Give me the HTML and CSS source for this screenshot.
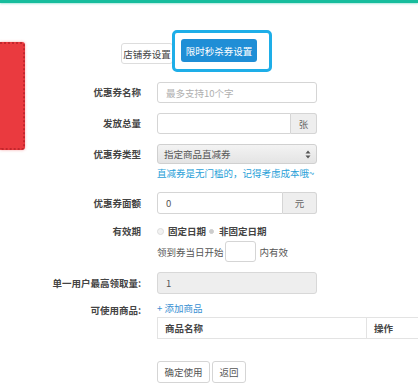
FILE: index.html
```html
<!DOCTYPE html>
<html lang="zh-CN">
<head>
<meta charset="utf-8">
<title>优惠券设置</title>
<link rel="stylesheet" href="styles.css">
</head>
<body>
<div class="topbar"></div>
<div class="page">
  <aside class="side"><div class="red"></div></aside>
  <main class="main">
    <div class="tabs">
      <button class="btn tab">店铺券设置</button>
      <span class="hl"><button class="btn tab-active">限时秒杀券设置</button></span>
    </div>
    <form class="form">
      <div class="row r1">
        <label class="lbl">优惠券名称</label>
        <div class="ctl"><input class="inp" placeholder="最多支持10个字"></div>
      </div>
      <div class="row r2">
        <label class="lbl">发放总量</label>
        <div class="ctl"><div class="group"><input class="inp g-inp"><span class="addon">张</span></div></div>
      </div>
      <div class="row r3">
        <label class="lbl">优惠券类型</label>
        <div class="ctl">
          <div class="select"><span>指定商品直减券</span>
            <svg class="arr" width="6" height="9" viewBox="0 0 6 9"><path d="M0.5 3.5 L3 0.5 L5.5 3.5Z M0.5 5.5 L3 8.5 L5.5 5.5Z" fill="#555"/></svg>
          </div>
          <div class="help">直减券是无门槛的，记得考虑成本哦~</div>
        </div>
      </div>
      <div class="row r4">
        <label class="lbl">优惠券面额</label>
        <div class="ctl"><div class="group"><input class="inp g-inp" value="0"><span class="addon wide">元</span></div></div>
      </div>
      <div class="row r5">
        <label class="lbl">有效期</label>
        <div class="ctl">
          <div class="radios">
            <span class="radio"></span><span class="rtxt">固定日期</span>
            <span class="radio on"></span><span class="rtxt">非固定日期</span>
          </div>
          <div class="days"><span>领到券当日开始</span><input class="inp small"><span>内有效</span></div>
        </div>
      </div>
      <div class="row r6">
        <label class="lbl">单一用户最高领取量:</label>
        <div class="ctl"><input class="inp dis" value="1" disabled></div>
      </div>
      <div class="row r7">
        <label class="lbl">可使用商品:</label>
        <div class="ctl">
          <a class="add">+ 添加商品</a>
          <div class="table"><div class="th name">商品名称</div><div class="th op">操作</div></div>
        </div>
      </div>
      <div class="row r8">
        <span class="lbl"></span>
        <div class="ctl actions"><button type="button" class="btn plain">确定使用</button><button type="button" class="btn plain">返回</button></div>
      </div>
    </form>
  </main>
</div>
</body>
</html>
```
FILE: styles.css
```css
* { box-sizing: border-box; }
html, body { margin: 0; padding: 0; }
body {
  width: 418px; height: 385px; overflow: hidden; background: #fff;
  font-family: "Noto Sans CJK SC", "Noto Sans", sans-serif;
  font-size: 9.5px; color: #444;
}
.topbar { height: 3px; background: #17bd9d; box-shadow: 0 1px 2px rgba(23,189,157,.35); }
.page { display: flex; }
.side { width: 25px; flex-shrink: 0; padding-top: 39px; }
.red {
  height: 108px; background: #ea3a3f;
  border: 2px dotted #c3262c; border-left: none;
  border-radius: 0 3px 3px 0;
  box-shadow: 0 0 3px rgba(234,58,63,.45);
}
.main { flex: 1; min-width: 0; }
.tabs { display: flex; align-items: flex-end; padding: 27px 0 0 96px; }
.btn {
  font-family: inherit; font-size: 9.5px; border-radius: 3px; cursor: pointer;
  display: inline-flex; align-items: center; justify-content: center; padding: 0;
}
.tab { width: 52px; height: 21px; border: 1px solid #ddd; background: #fff; color: #444; margin-bottom: 8px; }
.hl {
  display: inline-flex; border: 3px solid #1eaee8; border-radius: 5px;
  padding: 6px 12px 7px 6px; margin-left: -1px; background: #fff;
}
.tab-active { width: 76px; height: 23px; border: none; background: #1f8ed6; color: #fff; }
.form { margin-top: 10px; }
.row { display: grid; grid-template-columns: 116px 1fr; column-gap: 16px; margin-bottom: 10px; }
.lbl { text-align: right; font-weight: bold; color: #444; line-height: 21px; white-space: nowrap; }
.ctl { min-width: 0; }
.inp {
  display: block; width: 160px; height: 21px; border: 1px solid #d5d5d5; border-radius: 3px;
  padding: 0 8px; font-family: inherit; font-size: 9.5px; color: #555; background: #fff; outline: none;
}
.inp::placeholder { color: #b0b0b0; }
.group { display: flex; width: 160px; }
.g-inp { flex: 1; width: auto; min-width: 0; border-radius: 3px 0 0 3px; }
.addon {
  width: 26px; height: 21px; display: flex; align-items: center; justify-content: center;
  background: #eee; border: 1px solid #d5d5d5; border-left: none; border-radius: 0 3px 3px 0; color: #666;
}
.addon.wide { width: 34px; }
.r4 .inp, .r4 .addon { height: 22px; }
.select {
  width: 160px; height: 20px; display: flex; align-items: center; justify-content: space-between;
  padding: 0 5px 0 6px; border: 1px solid #d0d0d0; border-radius: 3px;
  background: linear-gradient(#f3f3f3, #e4e4e4); color: #555;
}
.help { margin-top: 2px; line-height: 14px; color: #2a9fd8; }
.r3 { margin-bottom: 12px; }
.r3 .lbl { line-height: 20px; }
.r4 .lbl { line-height: 22px; }
.r5 .lbl { line-height: 14px; }
.radios { display: flex; align-items: center; height: 14px; font-weight: bold; color: #444; }
.radio { width: 7px; height: 7px; border-radius: 50%; border: 1px solid #ddd; background: #f2f2f2; margin-right: 4px; }
.radio.on { width: 5px; height: 5px; margin-left: 3px; background: #ccc; border-color: #ccc; margin-right: 5px; }
.days { display: flex; align-items: center; margin-top: 3px; color: #555; }
.small { width: 31px; height: 21px; margin: 0 4px 0 1px; padding: 0; }
.dis { height: 22px; background: #eee; color: #555; border-color: #d8d8d8; }
.r6 .lbl { line-height: 22px; }
.r6 { margin-bottom: 7px; }
.r7 .lbl { line-height: 14px; margin-top: 2px; }
.add { display: block; line-height: 14px; color: #3a90d2; }
.table { display: flex; width: 261px; height: 22px; margin-top: 2px; border: 1px solid #e3e3e3; border-right: none; font-weight: bold; color: #444; }
.th { display: flex; align-items: center; padding-left: 7px; }
.name { width: 209px; border-right: 1px solid #e3e3e3; }
.op { flex: 1; }
.r7 { margin-bottom: 22px; }
.actions { display: flex; gap: 2px; }
.plain { height: 22px; border: 1px solid #d5d5d5; background: #fff; color: #555; }
.plain:first-child { width: 53px; }
.plain:last-child { width: 34px; }
```
